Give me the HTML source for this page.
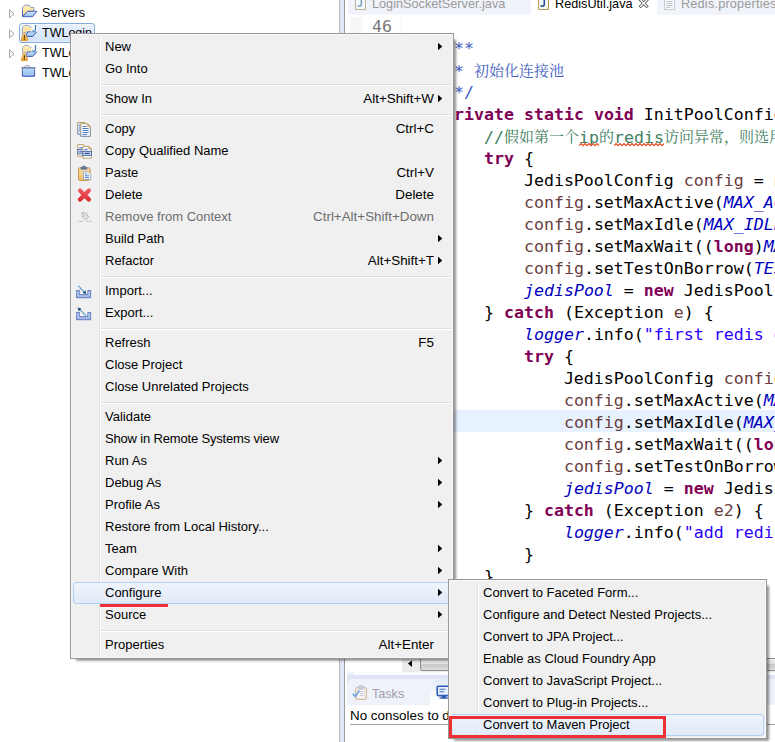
<!DOCTYPE html>
<html>
<head>
<meta charset="utf-8">
<title>Eclipse - Convert to Maven Project</title>
<style>
html,body{margin:0;padding:0;}
body{width:775px;height:742px;position:relative;overflow:hidden;background:#fff;font-family:"Liberation Sans","Noto Sans CJK SC",sans-serif;font-size:13px;color:#000;}
.abs{position:absolute;}
/* ---------- tree ---------- */
.tree-row{position:absolute;left:0;height:20px;line-height:20px;font-size:12.5px;white-space:nowrap;}
.tree-row .lbl{position:absolute;left:42px;top:0;}
.tree-row svg{position:absolute;}
/* ---------- editor ---------- */
#editor{position:absolute;left:345px;top:0;width:430px;height:672px;overflow:hidden;background:#fff;}
.tabtxt{position:absolute;top:-4px;height:16px;line-height:16px;font-size:12.7px;white-space:nowrap;}
.code{position:absolute;left:99px;top:16px;margin:0;font-family:"DejaVu Sans Mono","Liberation Mono","Noto Serif CJK SC",monospace;font-size:16.6px;letter-spacing:0;line-height:22px;white-space:pre;color:#000;}
.code div{height:22px;}
.kw{color:#7F0055;font-weight:bold;}
.jd{color:#3F5FBF;}
.cm{color:#3F7F5F;}
.st{color:#2A00FF;}
.fd{color:#0000C0;font-style:italic;}
.lv{color:#6A3E3E;}
.cj{font-family:"Noto Serif CJK SC",serif;font-size:15px;letter-spacing:0;position:relative;top:-1px;}
.sq{text-decoration:none;}
/* ---------- menus ---------- */
.menu{position:absolute;background:#F0F0F0;border:1px solid #979797;box-sizing:border-box;box-shadow:inset 0 0 0 1px #F8F8F8, 4.2px 4.6px 2.4px -2.1px rgba(0,0,0,0.46);}
.menu .gut{position:absolute;left:28px;top:2px;bottom:2px;width:1px;background:#E2E3E3;border-right:1px solid #fff;}
.mi{position:absolute;left:2px;right:2px;height:22px;line-height:21px;font-size:13px;white-space:nowrap;}
.mi .t{position:absolute;left:32px;top:0;}
.mi .k{position:absolute;right:17px;top:0;font-size:13.4px;}
.mi .ar{position:absolute;left:365px;top:6.7px;width:4.3px;height:7.6px;background:#000;clip-path:polygon(0 0,100% 50%,0 100%);}
.mi.dis{color:#6D6D6D;}
.mi.hot{background:linear-gradient(rgba(238,245,255,0.75),rgba(214,230,252,0.6));border:1px solid #AFD0F7;border-radius:3px;box-sizing:border-box;}
.mi.hot .t{left:31px;top:-1px;}
.mi.hot .ar{left:364px;top:5.7px;}
.sep{position:absolute;left:30px;right:2px;height:1px;background:#E0E0E0;border-bottom:1px solid #fff;}
.mi svg{position:absolute;left:3px;top:2px;}
</style>
</head>
<body>

<!-- ================= LEFT: project explorer ================= -->
<div id="tree" class="abs" style="left:0;top:0;width:339px;height:742px;background:#fff;">
  <svg width="0" height="0" style="position:absolute"><defs>
<linearGradient id="gfo" x1="0" y1="0" x2="0" y2="1"><stop offset="0" stop-color="#C4DBF6"/><stop offset="1" stop-color="#7FA8E3"/></linearGradient>
<linearGradient id="gfy" x1="0" y1="0" x2="0" y2="1"><stop offset="0" stop-color="#FEF0BE"/><stop offset="1" stop-color="#FAD98A"/></linearGradient><linearGradient id="gfl" x1="0" y1="0" x2="0" y2="1"><stop offset="0" stop-color="#D6E8FA"/><stop offset="1" stop-color="#94BDEC"/></linearGradient><linearGradient id="gwn" x1="0" y1="0" x2="0" y2="1"><stop offset="0" stop-color="#FCD468"/><stop offset="1" stop-color="#E79E30"/></linearGradient><linearGradient id="gcp" x1="0" y1="0" x2="0" y2="1"><stop offset="0" stop-color="#B6DBFB"/><stop offset="1" stop-color="#98BCEE"/></linearGradient><linearGradient id="gcs" x1="0" y1="0" x2="0" y2="1"><stop offset="0" stop-color="#7F8DB4"/><stop offset="1" stop-color="#2F47B2"/></linearGradient><linearGradient id="gtb" x1="0" y1="0" x2="0" y2="1"><stop offset="0" stop-color="#FFFFFF"/><stop offset="0.5" stop-color="#FDF3D8"/><stop offset="1" stop-color="#F3C25E"/></linearGradient>
<linearGradient id="gth" x1="0" y1="0" x2="0" y2="1"><stop offset="0" stop-color="#F4F4F4"/><stop offset="0.45" stop-color="#E4E4E4"/><stop offset="0.5" stop-color="#D2D2D2"/><stop offset="1" stop-color="#DDDDDD"/></linearGradient>
</defs></svg>
  <div class="abs" style="left:19px;top:23px;width:74px;height:18px;border:1px solid #84ACDD;border-radius:3px;background:linear-gradient(#E8F1FD,#D2E3FA);box-shadow:inset 0 0 0 1px rgba(255,255,255,0.45);"></div>
  <svg class="abs" style="left:8px;top:9px" width="8" height="10" viewBox="0 0 8 10"><path d="M1.5,0.8 L6,4.8 L1.5,8.8 Z" fill="#fff" stroke="#A6A6A6" stroke-width="1"/></svg><svg class="abs" style="left:8px;top:29px" width="8" height="10" viewBox="0 0 8 10"><path d="M1.5,0.8 L6,4.8 L1.5,8.8 Z" fill="#fff" stroke="#A6A6A6" stroke-width="1"/></svg><svg class="abs" style="left:8px;top:49px" width="8" height="10" viewBox="0 0 8 10"><path d="M1.5,0.8 L6,4.8 L1.5,8.8 Z" fill="#fff" stroke="#A6A6A6" stroke-width="1"/></svg>
  <svg class="abs" style="left:21px;top:3px" width="17" height="16" viewBox="0 0 17 16"><path d="M1.5,13.3 V4.4 L3.6,2.2 H8.2 L9.6,4.4 H12.9 V8.3 H6.6 Z" fill="url(#gfy)" stroke="#8C96BA" stroke-width="1" stroke-linejoin="round"/><path d="M1.5,8 V13.4" stroke="#4A5FB4" stroke-width="1"/>
<path d="M1.7,13.7 L6.6,8.3 H15.9 L11.6,13.7 Z" fill="url(#gfl)" stroke="#4259B6" stroke-width="0.95" stroke-linejoin="round"/></svg>
  <svg class="abs" style="left:21px;top:24px" width="17" height="18" viewBox="0 0 17 18">
<path d="M1.5,10 V3.4 L3.7,1.5 H7.3 L9,3.4 H11.6 V7.6 H6.4 L1.5,10 Z" fill="url(#gfy)" stroke="#9AA3C2" stroke-width="0.9" stroke-linejoin="round"/>
<path d="M4.3,12.4 L7,7.7 H15.8 L11.8,12.4 Z" fill="url(#gfl)" stroke="#4359B4" stroke-width="1" stroke-linejoin="round"/>
<path d="M7.2,7.7 H15.6" stroke="#8FB0E0" stroke-width="1"/>
<rect x="10.3" y="0" width="6.2" height="7.6" fill="#fff" opacity="0.92"/>
<path d="M14.5,1 V5.5 Q14.5,7.3 12.9,7.3 Q11.7,7.3 11.3,6.5" fill="none" stroke="#3A78B4" stroke-width="1.25"/>
<path d="M3.4,9.3 Q4,9.3 4.4,10.1 L6.7,15.3 Q7.1,16.8 5.8,16.8 H1 Q-0.3,16.8 0.1,15.3 L2.4,10.1 Q2.8,9.3 3.4,9.3 Z" fill="url(#gwn)" stroke="#D8932A" stroke-width="0.6"/>
<rect x="2.9" y="11.2" width="1" height="3.2" fill="#4a3200"/><rect x="2.9" y="15" width="1" height="1" fill="#4a3200"/>
</svg>
  <svg class="abs" style="left:21px;top:44px" width="17" height="18" viewBox="0 0 17 18">
<path d="M1.5,10 V3.4 L3.7,1.5 H7.3 L9,3.4 H11.6 V7.6 H6.4 L1.5,10 Z" fill="url(#gfy)" stroke="#9AA3C2" stroke-width="0.9" stroke-linejoin="round"/>
<path d="M4.3,12.4 L7,7.7 H15.8 L11.8,12.4 Z" fill="url(#gfl)" stroke="#4359B4" stroke-width="1" stroke-linejoin="round"/>
<path d="M7.2,7.7 H15.6" stroke="#8FB0E0" stroke-width="1"/>
<rect x="10.3" y="0" width="6.2" height="7.6" fill="#fff" opacity="0.92"/>
<path d="M14.5,1 V5.5 Q14.5,7.3 12.9,7.3 Q11.7,7.3 11.3,6.5" fill="none" stroke="#3A78B4" stroke-width="1.25"/>
<path d="M3.4,9.3 Q4,9.3 4.4,10.1 L6.7,15.3 Q7.1,16.8 5.8,16.8 H1 Q-0.3,16.8 0.1,15.3 L2.4,10.1 Q2.8,9.3 3.4,9.3 Z" fill="url(#gwn)" stroke="#D8932A" stroke-width="0.6"/>
<rect x="2.9" y="11.2" width="1" height="3.2" fill="#4a3200"/><rect x="2.9" y="15" width="1" height="1" fill="#4a3200"/>
</svg>
  <svg class="abs" style="left:20px;top:65px" width="17" height="14" viewBox="0 0 17 14">
<path d="M4.8,2.8 V1.7 Q4.8,0.7 5.8,0.7 H8.8 Q9.8,0.7 9.8,1.7 V2.8 Z" fill="url(#gtb)" stroke="#8E98B2" stroke-width="0.9"/>
<path d="M2.4,2.9 H14.6 V10.3 Q14.6,11.3 13.6,11.3 H3.4 Q2.4,11.3 2.4,10.3 Z" fill="url(#gcp)" stroke="url(#gcs)" stroke-width="1.1"/>
<path d="M1.2,2.8 H15.6" stroke="#7C88AA" stroke-width="1.1" fill="none"/>
</svg>
  <div class="tree-row" style="top:3px;"><span class="lbl">Servers</span></div>
  <div class="tree-row" style="top:23px;"><span class="lbl">TWLogin</span></div>
  <div class="tree-row" style="top:43px;"><span class="lbl">TWLoginProxy</span></div>
  <div class="tree-row" style="top:63px;"><span class="lbl">TWLoginWeb</span></div>
</div>

<!-- sash between explorer and editor -->
<div class="abs" style="left:339px;top:0;width:1px;height:742px;background:#B9B9B9;"></div>
<div class="abs" style="left:340px;top:0;width:4px;height:742px;background:#E1E6F6;"></div>
<div class="abs" style="left:344px;top:0;width:1px;height:742px;background:#9C9C9C;"></div>

<!-- ================= EDITOR ================= -->
<div id="editor">
  <!-- tab bar -->
  <div class="abs" style="left:3px;top:0;width:183px;height:15px;background:linear-gradient(#F1F3FA 0,#F1F3FA 14px,#F8F9FD 15px);"></div>
  <div class="abs" style="left:312px;top:0;width:118px;height:15px;background:linear-gradient(#F1F3FA 0,#F1F3FA 14px,#F8F9FD 15px);"></div>
  <span class="tabtxt" style="left:27px;color:#9A9A9A;">LoginSocketServer.java</span>
  <span class="tabtxt" style="left:210px;color:#000;">RedisUtil.java</span>
  <span class="tabtxt" style="left:336px;color:#9A9A9A;letter-spacing:0.2px;">Redis.properties</span>
  <svg class="abs" style="left:10px;top:0" width="12" height="11" viewBox="0 0 12 11" opacity="1"><path d="M0.5,-2 V9.5 H10.5 V-2" fill="#F4F7FC" stroke="#BDB391" stroke-width="1"/><path d="M6.3,-2 V4 Q6.3,6.2 4.4,6.2 Q3.2,6.2 2.8,5.2" fill="none" stroke="#86A5C6" stroke-width="1.6"/></svg><svg class="abs" style="left:193px;top:0" width="12" height="11" viewBox="0 0 12 11" opacity="1"><path d="M0.5,-2 V9.5 H10.5 V-2" fill="#F4F7FC" stroke="#B9994F" stroke-width="1"/><path d="M6.3,-2 V4 Q6.3,6.2 4.4,6.2 Q3.2,6.2 2.8,5.2" fill="none" stroke="#2B5290" stroke-width="1.6"/></svg><svg class="abs" style="left:293px;top:0" width="12" height="9" viewBox="0 0 12 9"><path d="M1.7,-0.8 L9.7,7.2 M9.7,-0.8 L1.7,7.2" stroke="#555" stroke-width="3" stroke-linecap="butt" fill="none"/><path d="M1.7,-0.8 L9.2,6.7 M9.7,-0.8 L2.2,6.7" stroke="#fff" stroke-width="1.3" stroke-linecap="butt" fill="none"/></svg><svg class="abs" style="left:319px;top:0" width="12" height="11" viewBox="0 0 12 11"><path d="M0.5,-2 V9.5 H10.5 V-2" fill="#F8F9FC" stroke="#C9C9CF" stroke-width="1"/><path d="M2.5,1.5 H8.5 M2.5,3.5 H8.5 M2.5,5.5 H8.5 M2.5,7.5 H6.5" stroke="#BFC3CC" stroke-width="1"/></svg>
  <!-- ruler -->
  <div class="abs" style="left:5px;top:17px;width:12px;height:639px;background:#F7F7F7;"></div>
  <div class="abs" style="left:56px;top:17px;width:1px;height:639px;background:#F3F3F3;"></div>
  <!-- current line -->
  <div class="abs" style="left:56px;top:410px;width:374px;height:22px;background:#E8F2FE;"></div>
  <span class="abs" style="left:27px;top:16px;font-family:'DejaVu Sans Mono','Liberation Mono',monospace;font-size:16.6px;line-height:22px;color:#787878;">46</span>
<div class="code"><div></div><div><span class="jd">/**</span></div><div><span class="jd"> * <span class="cj">初始化连接池</span></span></div><div><span class="jd"> */</span></div><div><span class="kw">private</span> <span class="kw">static</span> <span class="kw">void</span> InitPoolConfig() {</div><div>    <span class="cm">//<span class="cj">假如第一个</span><span class="sq">ip</span><span class="cj">的</span><span class="sq">redis</span><span class="cj">访问异常，则选用第二个</span></span></div><div>    <span class="kw">try</span> {</div><div>        JedisPoolConfig <span class="lv">config</span> = <span class="kw">new</span> JedisPoolConfig();</div><div>        <span class="lv">config</span>.setMaxActive(<span class="fd">MAX_ACTIVE</span>);</div><div>        <span class="lv">config</span>.setMaxIdle(<span class="fd">MAX_IDLE</span>);</div><div>        <span class="lv">config</span>.setMaxWait((<span class="kw">long</span>)<span class="fd">MAX_WAIT</span>);</div><div>        <span class="lv">config</span>.setTestOnBorrow(<span class="fd">TEST_ON_BORROW</span>);</div><div>        <span class="fd">jedisPool</span> = <span class="kw">new</span> JedisPool(<span class="lv">config</span>, <span class="fd">ADDR</span>);</div><div>    } <span class="kw">catch</span> (Exception <span class="lv">e</span>) {</div><div>        <span class="fd">logger</span>.info(<span class="st">"first redis error"</span>);</div><div>        <span class="kw">try</span> {</div><div>            JedisPoolConfig <span class="lv">config</span> = <span class="kw">new</span> JedisPoolConfig();</div><div>            <span class="lv">config</span>.setMaxActive(<span class="fd">MAX_ACTIVE</span>);</div><div>            <span class="lv">config</span>.setMaxIdle(<span class="fd">MAX_IDLE</span>);</div><div>            <span class="lv">config</span>.setMaxWait((<span class="kw">long</span>)<span class="fd">MAX_WAIT</span>);</div><div>            <span class="lv">config</span>.setTestOnBorrow(<span class="fd">TEST_ON_BORROW</span>);</div><div>            <span class="fd">jedisPool</span> = <span class="kw">new</span> JedisPool(<span class="lv">config</span>, <span class="fd">ADDR2</span>);</div><div>        } <span class="kw">catch</span> (Exception <span class="lv">e2</span>) {</div><div>            <span class="fd">logger</span>.info(<span class="st">"add redis error"</span>);</div><div>        }</div><div>    }</div></div>
  <svg class="abs" style="left:234px;top:143px" width="22" height="4" viewBox="0 0 22 4"><polyline points="0,2.6 2,0.6 4,2.6 6,0.6 8,2.6 10,0.6 12,2.6 14,0.6 16,2.6 18,0.6 20,2.6" fill="none" stroke="#EE4A22" stroke-width="1.25"/></svg>
  <svg class="abs" style="left:269px;top:143px" width="52" height="4" viewBox="0 0 52 4"><polyline points="0,2.6 2,0.6 4,2.6 6,0.6 8,2.6 10,0.6 12,2.6 14,0.6 16,2.6 18,0.6 20,2.6 22,0.6 24,2.6 26,0.6 28,2.6 30,0.6 32,2.6 34,0.6 36,2.6 38,0.6 40,2.6 42,0.6 44,2.6 46,0.6 48,2.6 50,0.6" fill="none" stroke="#EE4A22" stroke-width="1.25"/></svg>
  <!-- horizontal scrollbar -->
  <div class="abs" style="left:57px;top:658px;width:373px;height:14px;background:#EBEBEB;"></div>
  <svg class="abs" style="left:62px;top:660px" width="6" height="8" viewBox="0 0 6 8"><path d="M5,0.3 L0.9,3.6 L5,6.9 Z" fill="#000"/></svg>
  <div class="abs" style="left:75px;top:658px;width:360px;height:13px;box-sizing:border-box;border:1px solid #8E8E8E;border-radius:2px;background:linear-gradient(#EFEFEF 0%,#E2E2E2 40%,#C9C9C9 50%,#CFCFCF 75%,#E0E0E0 100%);"></div>
</div>

<!-- ================= BOTTOM PANEL ================= -->
<div id="bottom" class="abs" style="left:345px;top:672px;width:430px;height:70px;background:#fff;">
  <div class="abs" style="left:2px;top:0;width:428px;height:3px;background:#FBFCFE;"></div>
  <div class="abs" style="left:2px;top:3px;width:428px;height:5px;background:#DEE4F6;"></div>
  <div class="abs" style="left:2px;top:-6px;width:7px;height:9px;background:#EEF1FA;"></div>
  <div class="abs" style="left:0;top:-10px;width:12px;height:10px;background:#fff;border-bottom-left-radius:7px;"></div>
  <div class="abs" style="left:2px;top:7px;width:428px;height:26px;background:#DEE4F6;"></div>
  <div class="abs" style="left:2px;top:7px;width:428px;height:26px;background:#F0F2FA;border-top-left-radius:6px;"></div>
  <div class="abs" style="left:85px;top:7px;width:120px;height:27px;background:linear-gradient(#E2E9F7,#F4F7FC 45%,#fff 80%);border-top-left-radius:9px;"></div>
  <svg class="abs" style="left:7px;top:13px" width="16" height="16" viewBox="0 0 16 16" opacity="0.75">
    <rect x="3.5" y="2.5" width="11" height="12" rx="1.5" fill="#F3E3C6" stroke="#C9AE86"/>
    <rect x="5.5" y="4.5" width="7" height="8.5" fill="#FBFBFD" stroke="#D6D6DE" stroke-width="0.6"/>
    <rect x="6.5" y="0.8" width="5" height="3" rx="1" fill="#C3C8D4" stroke="#9AA0B0" stroke-width="0.6"/>
    <path d="M8,6.5 H11.5 M8,8.5 H11.5 M8,10.5 H11.5" stroke="#A9B3C9" stroke-width="0.9"/>
    <path d="M0.8,8.8 L3.2,11.4 L7.6,5.6" fill="none" stroke="#4C8BDA" stroke-width="1.7"/>
  </svg>
  <span class="abs" style="left:27px;top:13px;font-size:12.6px;line-height:18px;color:#A19DAE;">Tasks</span>
  <svg class="abs" style="left:91px;top:13px" width="16" height="15" viewBox="0 0 16 15">
    <rect x="1.2" y="1.2" width="13" height="9.4" rx="1" fill="#E8F0FC" stroke="#2B5CB8" stroke-width="1.6"/>
    <path d="M3.5,4.2 H9.5 M3.5,6.8 H8" stroke="#3B6CC8" stroke-width="1.1"/>
    <path d="M5.5,11 H10 V12.6 H12 V13.8 H3.5 V12.6 H5.5 Z" fill="#2B5CB8"/>
  </svg>
  <span class="abs" style="left:5px;top:35px;font-size:13.4px;line-height:18px;">No consoles to display at this time.</span>
  <div class="abs" style="left:5px;top:52px;width:425px;height:1px;background:#A0A0A0;"></div>
</div>

<!-- ================= CONTEXT MENU ================= -->
<div id="menu" class="menu" style="left:70px;top:33px;width:384px;height:626px;">
  <svg width="0" height="0" style="position:absolute"><defs><linearGradient id="gpg" x1="0" y1="0" x2="0" y2="1"><stop offset="0" stop-color="#B9A06C"/><stop offset="1" stop-color="#6F82A6"/></linearGradient><linearGradient id="gcl" x1="0" y1="0" x2="0" y2="1"><stop offset="0" stop-color="#F8E0AE"/><stop offset="1" stop-color="#EDBC68"/></linearGradient><linearGradient id="grx" x1="0" y1="0" x2="0" y2="1"><stop offset="0" stop-color="#F0686C"/><stop offset="1" stop-color="#D8232B"/></linearGradient><linearGradient id="gtr" x1="0" y1="0" x2="0" y2="1"><stop offset="0" stop-color="#B9C8EC"/><stop offset="1" stop-color="#7D97D2"/></linearGradient></defs></svg>
  <div class="gut"></div>
  <div class="mi" style="top:2px;"><span class="t">New</span><i class="ar"></i></div>
  <div class="mi" style="top:24px;"><span class="t">Go Into</span></div>
  <div class="sep" style="top:50px;"></div>
  <div class="mi" style="top:54px;"><span class="t">Show In</span><span class="k">Alt+Shift+W</span><i class="ar"></i></div>
  <div class="sep" style="top:80px;"></div>
  <div class="mi" style="top:84px;"><svg width="18" height="19" viewBox="0 0 18 19"><path d="M1.7,2.5 H9 V14.2 H1.7 Z" fill="#EAF1FA" stroke="url(#gpg)" stroke-width="1"/><path d="M2.8,5 H4 M2.8,7 H4 M2.8,9 H4 M2.8,11 H4" stroke="#5E86C6" stroke-width="1"/><path d="M4.7,3.7 H11.6 L14.4,6.5 V16.3 H4.7 Z" fill="#F7FAFE" stroke="url(#gpg)" stroke-width="1"/><path d="M11.6,3.7 V6.5 H14.4 Z" fill="#DDBA72" stroke="#B89A5E" stroke-width="0.6"/><path d="M6.5,6.5 H10.5 M6.5,8.5 H12.7 M6.5,10.5 H12.7 M6.5,12.5 H12.7 M6.5,14.4 H11" stroke="#4F7FC6" stroke-width="1"/></svg><span class="t">Copy</span><span class="k">Ctrl+C</span></div>
  <div class="mi" style="top:106px;"><svg width="18" height="19" viewBox="0 0 18 19"><path d="M1.7,2.5 H7.2 L9,4.3 V14.3 H1.7 Z" fill="#F4F7FC" stroke="#BDA56E" stroke-width="1"/><path d="M3.2,5.8 H7 " stroke="#5E86C6" stroke-width="1.2"/><rect x="1.7" y="7.6" width="6" height="4.3" fill="#DCE7F8" stroke="#5670A8" stroke-width="1"/><path d="M3.2,9.8 H7" stroke="#3F66B4" stroke-width="1.2"/><path d="M6.8,4.4 H12.8 L15.4,7 V16.2 H6.8 Z" fill="#F7FAFE" stroke="#BDA56E" stroke-width="1"/><path d="M12.8,4.4 V7 H15.4 Z" fill="#DDBA72" stroke="#B89A5E" stroke-width="0.6"/><path d="M8.6,7.5 H11.5" stroke="#4F7FC6" stroke-width="1.3"/><rect x="6.8" y="9.4" width="8.6" height="4" fill="#E3ECFA" stroke="#4D68A6" stroke-width="1"/><path d="M8.4,11.4 H13.8" stroke="#2F55A8" stroke-width="1.4"/></svg><span class="t">Copy Qualified Name</span></div>
  <div class="mi" style="top:128px;"><svg width="18" height="19" viewBox="0 0 18 19"><rect x="2.5" y="3.8" width="11.6" height="12.6" rx="1.4" fill="url(#gcl)" stroke="#C79448" stroke-width="1"/><path d="M5,5.2 V3.4 H6.2 Q6.4,2 7.9,2 Q9.4,2 9.6,3.4 H10.8 V5.2 Z" fill="#6D7FA8" stroke="#4E5F8A" stroke-width="0.7"/><path d="M7.6,7.8 H12.6 L14.8,10 V15.5 H7.6 Z" fill="#F9FBFE" stroke="#8F9FBC" stroke-width="0.8"/><path d="M12.6,7.8 V10 H14.8 Z" fill="#E3C27C"/><path d="M9,10 H11 M9,11.8 H13.2 M9,13.6 H13.2" stroke="#4F7FC6" stroke-width="1"/></svg><span class="t">Paste</span><span class="k">Ctrl+V</span></div>
  <div class="mi" style="top:150px;"><svg width="18" height="19" viewBox="0 0 18 19"><path d="M4,4.5 L12.9,13.4 M12.9,4.5 L4,13.4" stroke="url(#grx)" stroke-width="4.3" stroke-linecap="round" fill="none"/><path d="M4,4.5 L12.9,13.4 M12.9,4.5 L4,13.4" stroke="#E8454B" stroke-width="2.2" stroke-linecap="round" fill="none" opacity="0.55"/></svg><span class="t">Delete</span><span class="k">Delete</span></div>
  <div class="mi dis" style="top:172px;"><svg width="18" height="19" viewBox="0 0 18 19"><path d="M6,4.6 H8.6 Q11.6,5 11.4,8.2 H13 L9.6,12.4 L6.2,8.2 H8 Q8.4,6.6 6,6.4 Z" fill="#E4E4E4" stroke="#B4B4B4" stroke-width="0.9" stroke-linejoin="round"/><path d="M2,13.4 H7 M11,13.4 H16" stroke="#B0B0B0" stroke-width="1" stroke-dasharray="1.3,0.7"/></svg><span class="t">Remove from Context</span><span class="k">Ctrl+Alt+Shift+Down</span></div>
  <div class="mi" style="top:194px;"><span class="t">Build Path</span><i class="ar"></i></div>
  <div class="mi" style="top:216px;"><span class="t">Refactor</span><span class="k">Alt+Shift+T</span><i class="ar"></i></div>
  <div class="sep" style="top:242px;"></div>
  <div class="mi" style="top:246px;"><svg width="18" height="19" viewBox="0 0 18 19"><path d="M0.6,8.6 H3.3 V12.6 H11.9 V8.6 H14.6 V15.6 H0.6 Z" fill="url(#gtr)" stroke="#6F8ACA" stroke-width="1.1"/><path d="M2,10 V14.1 H13.2 V10" fill="none" stroke="#D5DFF6" stroke-width="0.8"/><path d="M2.2,3.9 L8.6,10.4" stroke="#3A8CC0" stroke-width="1.2" stroke-dasharray="1.8,0.5"/><path d="M10.3,12 L6.6,11 L9.4,8.2 Z" fill="#1F4F7C"/></svg><span class="t">Import...</span></div>
  <div class="mi" style="top:268px;"><svg width="18" height="19" viewBox="0 0 18 19"><path d="M0.6,8.6 H3.3 V12.6 H11.9 V8.6 H14.6 V15.6 H0.6 Z" fill="url(#gtr)" stroke="#6F8ACA" stroke-width="1.1"/><path d="M2,10 V14.1 H13.2 V10" fill="none" stroke="#D5DFF6" stroke-width="0.8"/><path d="M9.9,11.6 L3.6,5.4" stroke="#3A8CC0" stroke-width="1.2" stroke-dasharray="1.8,0.5"/><path d="M1.6,3.6 L5.4,4.6 L2.6,7.4 Z" fill="#1F4F7C"/></svg><span class="t">Export...</span></div>
  <div class="sep" style="top:294px;"></div>
  <div class="mi" style="top:298px;"><span class="t">Refresh</span><span class="k">F5</span></div>
  <div class="mi" style="top:320px;"><span class="t">Close Project</span></div>
  <div class="mi" style="top:342px;"><span class="t">Close Unrelated Projects</span></div>
  <div class="sep" style="top:368px;"></div>
  <div class="mi" style="top:372px;"><span class="t">Validate</span></div>
  <div class="mi" style="top:394px;"><span class="t" style="letter-spacing:-0.17px">Show in Remote Systems view</span></div>
  <div class="mi" style="top:416px;"><span class="t">Run As</span><i class="ar"></i></div>
  <div class="mi" style="top:438px;"><span class="t">Debug As</span><i class="ar"></i></div>
  <div class="mi" style="top:460px;"><span class="t">Profile As</span><i class="ar"></i></div>
  <div class="mi" style="top:482px;"><span class="t">Restore from Local History...</span></div>
  <div class="mi" style="top:504px;"><span class="t">Team</span><i class="ar"></i></div>
  <div class="mi" style="top:526px;"><span class="t">Compare With</span><i class="ar"></i></div>
  <div class="mi hot" style="top:548px;"><span class="t">Configure</span><i class="ar"></i></div>
  <div class="mi" style="top:570px;"><span class="t">Source</span><i class="ar"></i></div>
  <div class="sep" style="top:596px;"></div>
  <div class="mi" style="top:600px;"><span class="t">Properties</span><span class="k">Alt+Enter</span></div>
</div>
<!-- red underline under Configure -->
<div class="abs" style="left:100px;top:604px;width:68px;height:3px;background:#EE2F33;"></div>

<!-- ================= SUBMENU ================= -->
<div id="submenu" class="menu" style="left:448px;top:579px;width:319px;height:160px;">
  <div class="gut"></div>
  <div class="mi" style="top:2px;"><span class="t">Convert to Faceted Form...</span></div>
  <div class="mi" style="top:24px;"><span class="t">Configure and Detect Nested Projects...</span></div>
  <div class="mi" style="top:46px;"><span class="t">Convert to JPA Project...</span></div>
  <div class="mi" style="top:68px;"><span class="t">Enable as Cloud Foundry App</span></div>
  <div class="mi" style="top:90px;"><span class="t">Convert to JavaScript Project...</span></div>
  <div class="mi" style="top:112px;"><span class="t">Convert to Plug-in Projects...</span></div>
  <div class="mi hot" style="top:134px;"><span class="t">Convert to Maven Project</span></div>
</div>
<!-- red box around Convert to Maven Project -->
<div class="abs" style="left:449px;top:716px;width:217px;height:22px;box-sizing:border-box;border:3px solid #EE2F33;"></div>

</body>
</html>
